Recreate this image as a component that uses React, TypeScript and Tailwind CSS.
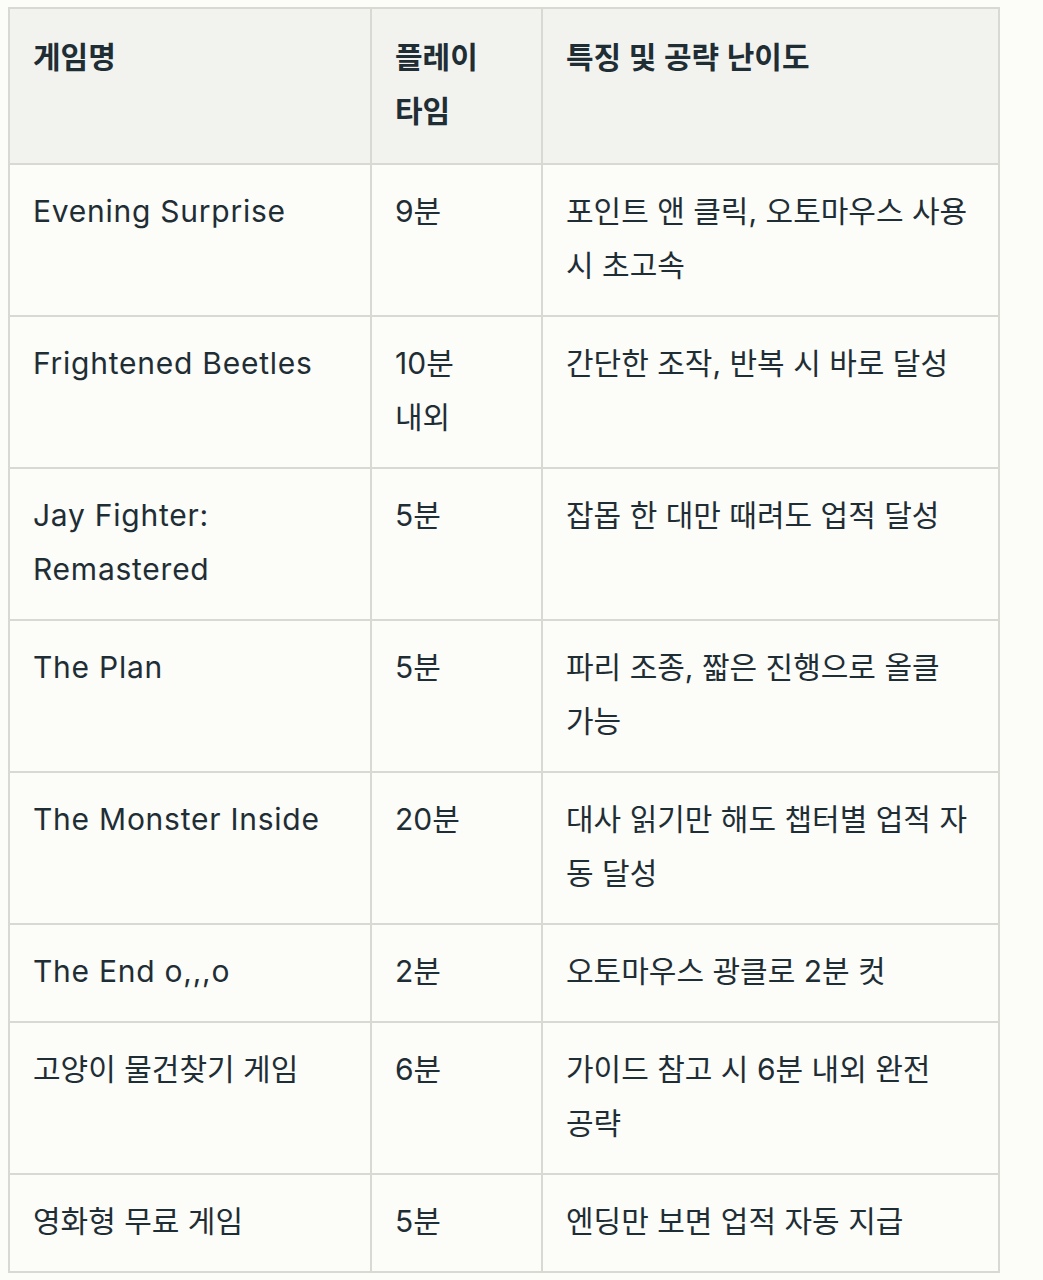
import React from "react";

type Cell = React.ReactNode;

const rows: [Cell, Cell, Cell][] = [
  ["Evening Surprise", "9분", "포인트 앤 클릭, 오토마우스 사용 시 초고속"],
  [
    "Frightened Beetles",
    <>
      10분
      <br />
      내외
    </>,
    "간단한 조작, 반복 시 바로 달성",
  ],
  ["Jay Fighter: Remastered", "5분", "잡몹 한 대만 때려도 업적 달성"],
  ["The Plan", "5분", "파리 조종, 짧은 진행으로 올클 가능"],
  [
    "The Monster Inside",
    "20분",
    <>
      대사 읽기만 해도 챕터별 업적 자<br />동 달성
    </>,
  ],
  ["The End o,,,o", "2분", "오토마우스 광클로 2분 컷"],
  ["고양이 물건찾기 게임", "6분", "가이드 참고 시 6분 내외 완전 공략"],
  ["영화형 무료 게임", "5분", "엔딩만 보면 업적 자동 지급"],
];

const isLatin = (c: Cell) => typeof c === "string" && /^[\x00-\x7f]+$/.test(c);

export default function App() {
  return (
    <div
      className="min-h-[1280px] w-full bg-[#fcfcf9] pl-[8px] pt-[7px] text-[#1f2e35]"
      style={{ fontFamily: '"Inter", "Noto Sans CJK KR", sans-serif' }}
    >
      <table className="w-[990px] table-fixed border-collapse text-[30px] leading-[54px] [word-break:keep-all]">
        <colgroup>
          <col className="w-[362px]" />
          <col className="w-[171px]" />
          <col className="w-[457px]" />
        </colgroup>
        <thead>
          <tr className="bg-[#f2f3ef]">
            <th className="border-2 border-[#d9d9d4] px-[23px] pb-[25px] pt-[21px] text-left align-top font-semibold">게임명</th>
            <th className="border-2 border-[#d9d9d4] px-[23px] pb-[25px] pt-[21px] text-left align-top font-semibold">플레이 타임</th>
            <th className="border-2 border-[#d9d9d4] px-[23px] pb-[25px] pt-[21px] text-left align-top font-semibold">특징 및 공략 난이도</th>
          </tr>
        </thead>
        <tbody>
          {rows.map((r, i) => (
            <tr key={i}>
              {r.map((c, j) => (
                <td
                  key={j}
                  className={
                    isLatin(c)
                      ? "border-2 border-[#d9d9d4] px-[23px] pb-[23px] pt-[19px] align-top tracking-[0.75px]"
                      : "border-2 border-[#d9d9d4] px-[23px] pb-[23px] pt-[19px] align-top"
                  }
                >
                  {c}
                </td>
              ))}
            </tr>
          ))}
        </tbody>
      </table>
    </div>
  );
}
